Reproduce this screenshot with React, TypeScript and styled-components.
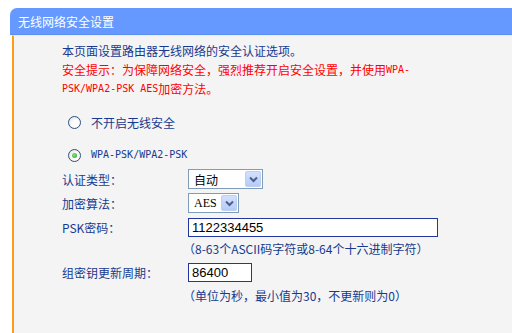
import React from 'react';
import styled, { createGlobalStyle } from 'styled-components';

const GlobalStyle = createGlobalStyle`
  html, body {
    margin: 0;
    padding: 0;
    background: #ffffff;
  }
  body {
    font-family: "Noto Sans CJK SC", "DejaVu Sans", sans-serif;
    font-size: 12px;
  }
`;

const Page = styled.div`
  width: 512px;
  height: 333px;
  overflow: hidden;
  padding: 8px 0 0 10px;
  box-sizing: border-box;
`;

const TitleBar = styled.div`
  height: 26px;
  background: #6699ff;
  border-bottom: 1px solid #5e90ee;
  border-top-left-radius: 7px;
  color: #ffffff;
  font-size: 12px;
  line-height: 27px;
  padding-left: 8px;
  white-space: nowrap;
`;

const Body = styled.div`
  margin-left: 2px;
  border-left: 2px solid #ff9c1a;
  background: #f4f4f4;
  border-top: 1px solid #ececec;
  min-height: 300px;
  padding: 5px 0 0 48px;
  color: #173a8f;
  white-space: nowrap;
`;

const Line = styled.div<{ $warn?: boolean }>`
  height: 19px;
  line-height: 19px;
  display: flex;
  align-items: center;
  color: ${p => (p.$warn ? '#ff0000' : '#173a8f')};
`;

const Mono = styled.span`
  font-family: "DejaVu Sans Mono", "Liberation Mono", monospace;
  font-size: 10px;
  line-height: 1;
`;

const RadioRow = styled.div<{ $top: number }>`
  display: flex;
  align-items: center;
  height: 20px;
  margin-top: ${p => p.$top}px;
  padding-left: 6px;
`;

const RadioDot = styled.span<{ $on?: boolean }>`
  width: 11px;
  height: 11px;
  border-radius: 50%;
  border: 1px solid #2f4f7f;
  background: radial-gradient(circle at 60% 60%, #ffffff 30%, #dcdcd4 100%);
  display: flex;
  align-items: center;
  justify-content: center;
  margin-right: 10px;

  &::after {
    content: '';
    width: 5px;
    height: 5px;
    border-radius: 50%;
    background: ${p => (p.$on ? 'radial-gradient(circle at 40% 40%, #8be28b, #21a121)' : 'transparent')};
  }
`;

const FieldRow = styled.div<{ $top: number }>`
  display: flex;
  align-items: center;
  height: 20px;
  margin-top: ${p => p.$top}px;
`;

const Label = styled.div`
  width: 126px;
  flex-shrink: 0;
`;

const Combo = styled.div<{ $w: number }>`
  width: ${p => p.$w}px;
  height: 20px;
  box-sizing: border-box;
  border: 1px solid #7f9db9;
  background: #ffffff;
  display: flex;
  align-items: center;
  justify-content: space-between;
  padding: 0 1px 0 5px;
  color: #000000;
`;

const ComboText = styled.span<{ $latin?: boolean }>`
  font-family: ${p =>
    p.$latin ? '"Liberation Serif", serif' : '"Noto Sans CJK SC", sans-serif'};
  font-size: 12px;
`;

const ComboButton = styled.span`
  width: 16px;
  height: 16px;
  box-sizing: border-box;
  border: 1px solid #bccff5;
  border-radius: 2px;
  background: linear-gradient(#d3e0fd, #b5cbf8);
  display: flex;
  align-items: center;
  justify-content: center;
`;

const TextBox = styled.input<{ $w: number }>`
  width: ${p => p.$w}px;
  height: 19px;
  box-sizing: border-box;
  border: 1px solid #2236a0;
  background: #ffffff;
  padding: 0 3px;
  margin: 0;
  font-family: "Liberation Sans", Arial, sans-serif;
  font-size: 13px;
  color: #000000;
  outline: none;
`;

const Hint = styled.div<{ $top: number }>`
  padding-left: 121px;
  margin-top: ${p => p.$top}px;
  line-height: 19px;
`;

const Chevron = () => (
  <svg width="9" height="7" viewBox="0 0 9 7">
    <path d="M1 1.5 L4.5 5 L8 1.5" fill="none" stroke="#4d6185" strokeWidth="2" />
  </svg>
);

const Select = ({ value, width, latin }: { value: string; width: number; latin?: boolean }) => (
  <Combo $w={width}>
    <ComboText $latin={latin}>{value}</ComboText>
    <ComboButton>
      <Chevron />
    </ComboButton>
  </Combo>
);

const App = () => {
  return (
    <Page>
      <GlobalStyle />
      <TitleBar>无线网络安全设置</TitleBar>
      <Body>
        <Line>本页面设置路由器无线网络的安全认证选项。</Line>
        <Line $warn>
          安全提示：为保障网络安全，强烈推荐开启安全设置，并使用<Mono>WPA-</Mono>
        </Line>
        <Line $warn>
          <Mono>PSK/WPA2-PSK AES</Mono>加密方法。
        </Line>

        <RadioRow $top={14}>
          <RadioDot />
          不开启无线安全
        </RadioRow>
        <RadioRow $top={13}>
          <RadioDot $on />
          <Mono>WPA-PSK/WPA2-PSK</Mono>
        </RadioRow>

        <FieldRow $top={4}>
          <Label>认证类型：</Label>
          <Select value="自动" width={75} />
        </FieldRow>
        <FieldRow $top={4}>
          <Label>加密算法：</Label>
          <Select value="AES" width={51} latin />
        </FieldRow>
        <FieldRow $top={4}>
          <Label>PSK密码：</Label>
          <TextBox $w={250} defaultValue="1122334455" readOnly />
        </FieldRow>
        <Hint $top={2}>（8-63个ASCII码字符或8-64个十六进制字符）</Hint>
        <FieldRow $top={4}>
          <Label>组密钥更新周期：</Label>
          <TextBox $w={64} defaultValue="86400" readOnly />
        </FieldRow>
        <Hint $top={4}>（单位为秒，最小值为30，不更新则为0）</Hint>
      </Body>
    </Page>
  );
};

export default App;
